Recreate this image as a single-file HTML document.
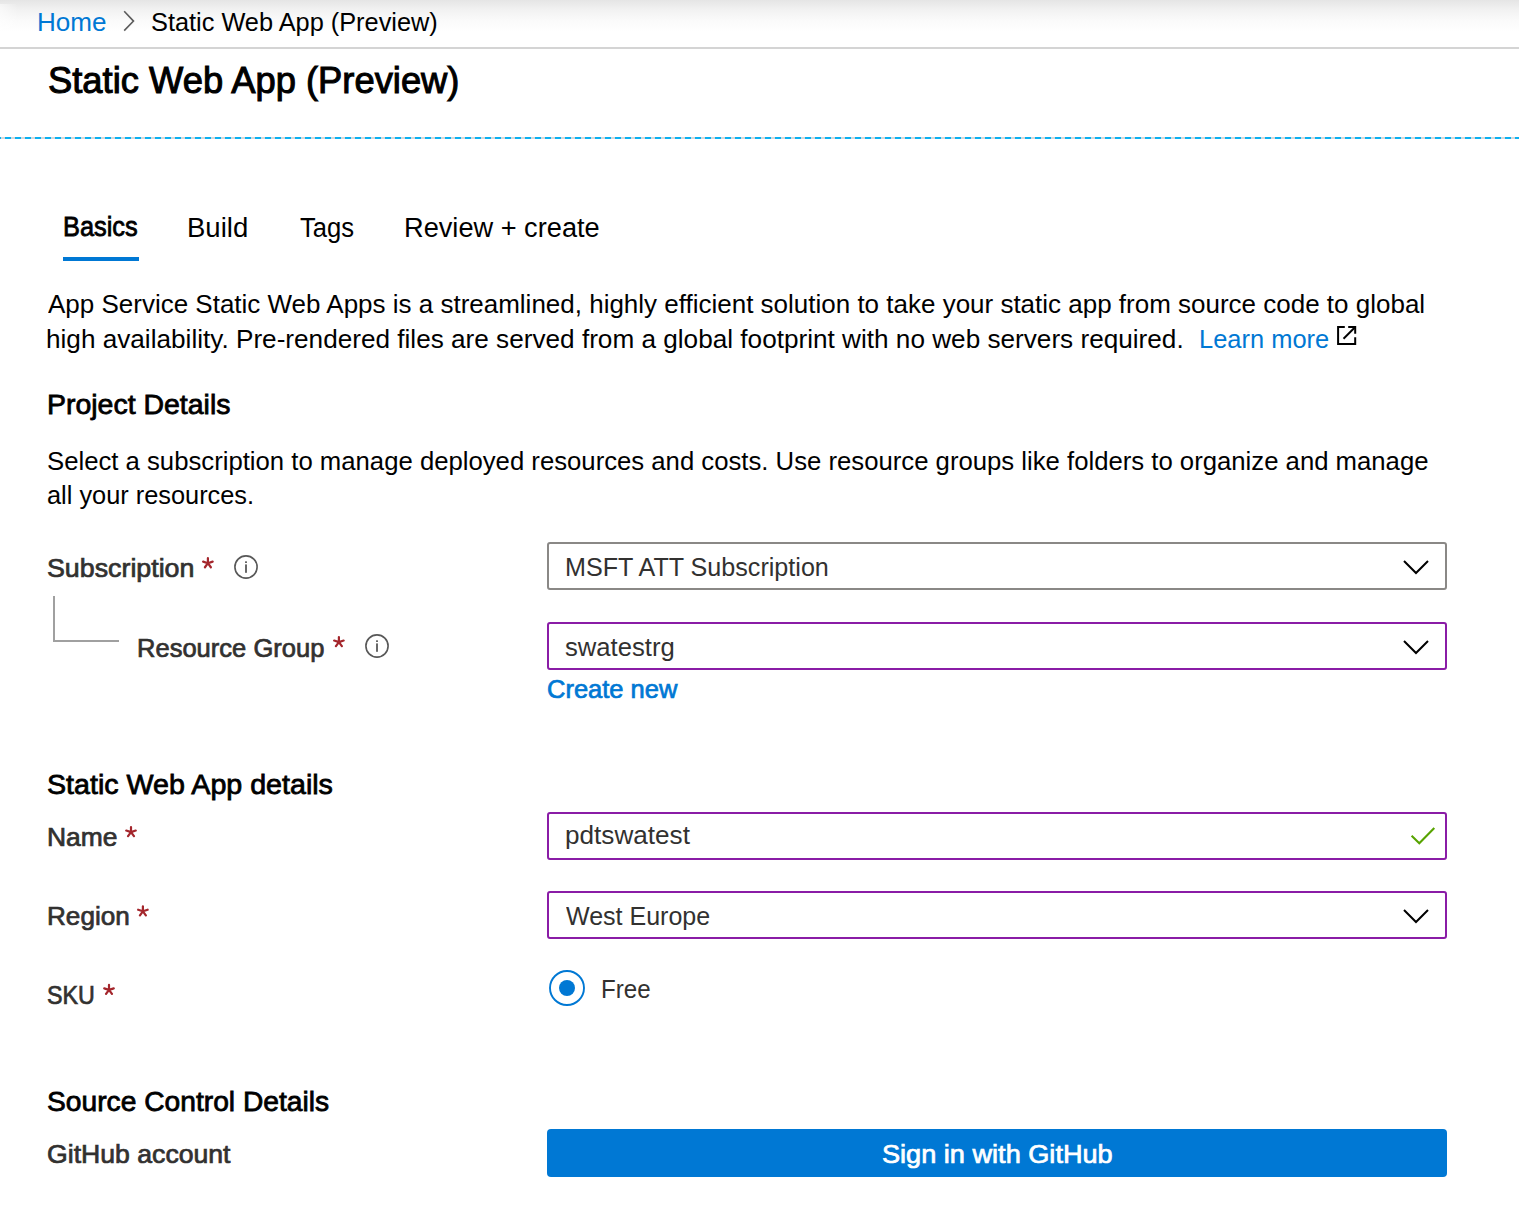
<!DOCTYPE html>
<html><head><meta charset="utf-8"><title>Static Web App (Preview)</title>
<style>
html,body{margin:0;padding:0;background:#fff;width:1519px;height:1220px;overflow:hidden;position:relative}
.t{position:absolute;font-family:"Liberation Sans",sans-serif;line-height:1;white-space:pre;transform-origin:0 0}
.box{position:absolute;left:547px;width:896px;height:44px;border:2px solid #8a8886;border-radius:3px;background:#fff}
.ic{position:absolute;overflow:visible}
.shade{position:absolute;left:0;top:0;width:1519px;height:47px;background:linear-gradient(#e5e5e5 0px,#f2f2f2 10px,#fafafa 20px,#fff 32px)}
.hl{position:absolute;left:0;top:47px;width:1519px;height:2px;background:#d4d4d4}
.dash{position:absolute;left:0;top:137px;width:1519px;height:2px;background:repeating-linear-gradient(90deg,#0cb0f0 0px,#0cb0f0 1px,#d8d8d8 1px,#d8d8d8 5px,#0cb0f0 5px,#0cb0f0 10px)}
</style></head><body>
<div class="shade"></div>
<div style="position:absolute;left:0;top:4px;width:18px;height:43px;background:linear-gradient(90deg,rgba(255,255,255,.55),rgba(255,255,255,0))"></div>
<div class="hl"></div>
<svg class="ic" style="left:118px;top:6px" width="22" height="30" viewBox="0 0 22 30"><path d="M6.2 5.3 L15.5 15.1 L6.2 24.6" fill="none" stroke="#5c5c5c" stroke-width="1.6"/></svg>
<div class="dash"></div>
<div style="position:absolute;left:63px;top:257px;width:76px;height:4px;background:#0078d4"></div>
<svg class="ic" style="left:1330px;top:318px" width="34" height="34" viewBox="0 0 34 34">
<path d="M14.8 9 H8.1 V26 H25.2 V19.2" fill="none" stroke="#000" stroke-width="2"/>
<path d="M18.2 9 H25.2 V15.7" fill="none" stroke="#000" stroke-width="2"/>
<path d="M13.5 20.7 L24.5 9.7" fill="none" stroke="#000" stroke-width="2"/>
</svg>
<svg class="ic" style="left:232px;top:552.9px" width="28" height="28" viewBox="0 0 28 28"><circle cx="14" cy="14" r="11.1" fill="none" stroke="#585858" stroke-width="1.6"/><rect x="13.1" y="8.3" width="1.8" height="1.7" fill="#585858"/><rect x="13.1" y="11.4" width="1.8" height="8.4" fill="#585858"/></svg>
<svg class="ic" style="left:362.8px;top:631.9px" width="28" height="28" viewBox="0 0 28 28"><circle cx="14" cy="14" r="11.1" fill="none" stroke="#585858" stroke-width="1.6"/><rect x="13.1" y="8.3" width="1.8" height="1.7" fill="#585858"/><rect x="13.1" y="11.4" width="1.8" height="8.4" fill="#585858"/></svg>
<div style="position:absolute;left:53px;top:596px;width:2px;height:46px;background:#a0a0a0"></div>
<div style="position:absolute;left:53px;top:640px;width:66px;height:2px;background:#a0a0a0"></div>
<div class="box" style="top:542px;border-color:#8a8886"></div>
<div class="box" style="top:622px;border-color:#8a1ca6"></div>
<div class="box" style="top:812px;border-color:#8a1ca6"></div>
<div class="box" style="top:891px;border-color:#8a1ca6"></div>
<svg class="ic" style="left:1400px;top:557px" width="32" height="20" viewBox="0 0 32 20"><path d="M4 4 L16 16 L28 4" fill="none" stroke="#000" stroke-width="2"/></svg>
<svg class="ic" style="left:1400px;top:637px" width="32" height="20" viewBox="0 0 32 20"><path d="M4 4 L16 16 L28 4" fill="none" stroke="#000" stroke-width="2"/></svg>
<svg class="ic" style="left:1400px;top:905.5px" width="32" height="20" viewBox="0 0 32 20"><path d="M4 4 L16 16 L28 4" fill="none" stroke="#000" stroke-width="2"/></svg>
<svg class="ic" style="left:1405px;top:820px" width="36" height="30" viewBox="0 0 36 30"><path d="M6.6 15.7 L14.3 23.2 L29.3 7.9" fill="none" stroke="#57a300" stroke-width="2.1"/></svg>
<svg class="ic" style="left:545px;top:966px" width="44" height="44" viewBox="0 0 44 44"><circle cx="22" cy="22" r="17" fill="none" stroke="#0078d4" stroke-width="1.9"/><circle cx="22" cy="22" r="8" fill="#0078d4"/></svg>
<div style="position:absolute;left:547px;top:1129px;width:900px;height:48px;background:#0078d4;border-radius:4px"></div>
<svg class="ic" style="left:0;top:0" width="1519" height="1220"><path d="M207.90 563.20 L207.90 558.20 M207.90 563.20 L212.66 561.65 M207.90 563.20 L210.84 567.25 M207.90 563.20 L204.96 567.25 M207.90 563.20 L203.14 561.65 M338.90 642.10 L338.90 637.10 M338.90 642.10 L343.66 640.55 M338.90 642.10 L341.84 646.15 M338.90 642.10 L335.96 646.15 M338.90 642.10 L334.14 640.55 M131.00 832.10 L131.00 827.10 M131.00 832.10 L135.76 830.55 M131.00 832.10 L133.94 836.15 M131.00 832.10 L128.06 836.15 M131.00 832.10 L126.24 830.55 M142.90 911.30 L142.90 906.30 M142.90 911.30 L147.66 909.75 M142.90 911.30 L145.84 915.35 M142.90 911.30 L139.96 915.35 M142.90 911.30 L138.14 909.75 M109.00 989.90 L109.00 984.90 M109.00 989.90 L113.76 988.35 M109.00 989.90 L111.94 993.95 M109.00 989.90 L106.06 993.95 M109.00 989.90 L104.24 988.35 " fill="none" stroke="#a4262c" stroke-width="2.2" stroke-linecap="round"/></svg>
<span class="t" style="left:36.9px;top:8.9px;font-size:26.16px;font-weight:400;color:#0078d4;transform:scaleX(0.997)">Home</span>
<span class="t" style="left:150.9px;top:8.9px;font-size:26.16px;font-weight:400;color:#000;transform:scaleX(0.9685)">Static Web App (Preview)</span>
<span class="t" style="left:47.7px;top:62.0px;font-size:37.79px;font-weight:400;-webkit-text-stroke:1.06px #000;color:#000;transform:scaleX(0.9621)">Static Web App (Preview)</span>
<span class="t" style="left:63.1px;top:211.7px;font-size:28.2px;font-weight:400;-webkit-text-stroke:0.79px #000;color:#000;transform:scaleX(0.9)">Basics</span>
<span class="t" style="left:187.3px;top:212.9px;font-size:28.2px;font-weight:400;color:#000;transform:scaleX(0.9763)">Build</span>
<span class="t" style="left:299.5px;top:213.2px;font-size:28.2px;font-weight:400;color:#000;transform:scaleX(0.9086)">Tags</span>
<span class="t" style="left:404.3px;top:213.2px;font-size:28.2px;font-weight:400;color:#000;transform:scaleX(0.9645)">Review + create</span>
<span class="t" style="left:47.7px;top:291.7px;font-size:25.58px;font-weight:400;color:#000;transform:scaleX(1.016)">App Service Static Web Apps is a streamlined, highly efficient solution to take your static app from source code to global</span>
<span class="t" style="left:45.7px;top:326.5px;font-size:25.58px;font-weight:400;color:#000;transform:scaleX(1.0224)">high availability. Pre-rendered files are served from a global footprint with no web servers required.</span>
<span class="t" style="left:1198.6px;top:326.5px;font-size:25.58px;font-weight:400;color:#0078d4;transform:scaleX(0.9953)">Learn more</span>
<span class="t" style="left:46.6px;top:391.0px;font-size:27.91px;font-weight:400;-webkit-text-stroke:0.78px #000;color:#000;transform:scaleX(1.0198)">Project Details</span>
<span class="t" style="left:47.2px;top:448.7px;font-size:25.58px;font-weight:400;color:#000;transform:scaleX(1.0048)">Select a subscription to manage deployed resources and costs. Use resource groups like folders to organize and manage</span>
<span class="t" style="left:47.2px;top:483.3px;font-size:25.58px;font-weight:400;color:#000;transform:scaleX(0.9908)">all your resources.</span>
<span class="t" style="left:47.3px;top:555.1px;font-size:26.45px;font-weight:400;-webkit-text-stroke:0.74px #323130;color:#323130;transform:scaleX(1.0133)">Subscription</span>
<span class="t" style="left:136.9px;top:635.0px;font-size:26.45px;font-weight:400;-webkit-text-stroke:0.74px #323130;color:#323130;transform:scaleX(0.966)">Resource Group</span>
<span class="t" style="left:564.6px;top:555.1px;font-size:25.87px;font-weight:400;color:#323130;transform:scaleX(0.9713)">MSFT ATT Subscription</span>
<span class="t" style="left:565.1px;top:635.1px;font-size:25.87px;font-weight:400;color:#323130;transform:scaleX(0.9917)">swatestrg</span>
<span class="t" style="left:547.4px;top:676.7px;font-size:25.58px;font-weight:400;-webkit-text-stroke:0.72px #0078d4;color:#0078d4;transform:scaleX(0.9969)">Create new</span>
<span class="t" style="left:47.3px;top:770.0px;font-size:28.2px;font-weight:400;-webkit-text-stroke:0.79px #000;color:#000;transform:scaleX(1.0157)">Static Web App details</span>
<span class="t" style="left:46.9px;top:823.6px;font-size:26.16px;font-weight:400;-webkit-text-stroke:0.73px #323130;color:#323130;transform:scaleX(1.0104)">Name</span>
<span class="t" style="left:564.7px;top:822.9px;font-size:25.87px;font-weight:400;color:#323130;transform:scaleX(1.0107)">pdtswatest</span>
<span class="t" style="left:46.5px;top:903.0px;font-size:26.16px;font-weight:400;-webkit-text-stroke:0.73px #323130;color:#323130;transform:scaleX(0.9988)">Region</span>
<span class="t" style="left:565.7px;top:903.5px;font-size:25.87px;font-weight:400;color:#323130;transform:scaleX(0.9676)">West Europe</span>
<span class="t" style="left:47.0px;top:982.0px;font-size:26.16px;font-weight:400;-webkit-text-stroke:0.73px #323130;color:#323130;transform:scaleX(0.8882)">SKU</span>
<span class="t" style="left:600.9px;top:976.7px;font-size:25.58px;font-weight:400;color:#323130;transform:scaleX(0.9429)">Free</span>
<span class="t" style="left:47.3px;top:1086.6px;font-size:28.2px;font-weight:400;-webkit-text-stroke:0.79px #000;color:#000;transform:scaleX(1.0004)">Source Control Details</span>
<span class="t" style="left:46.9px;top:1140.6px;font-size:26.45px;font-weight:400;-webkit-text-stroke:0.74px #323130;color:#323130;transform:scaleX(1.0071)">GitHub account</span>
<span class="t" style="left:881.8px;top:1141.7px;font-size:25.87px;font-weight:400;-webkit-text-stroke:0.72px #fff;color:#fff;transform:scaleX(1.0491)">Sign in with GitHub</span>
</body></html>
